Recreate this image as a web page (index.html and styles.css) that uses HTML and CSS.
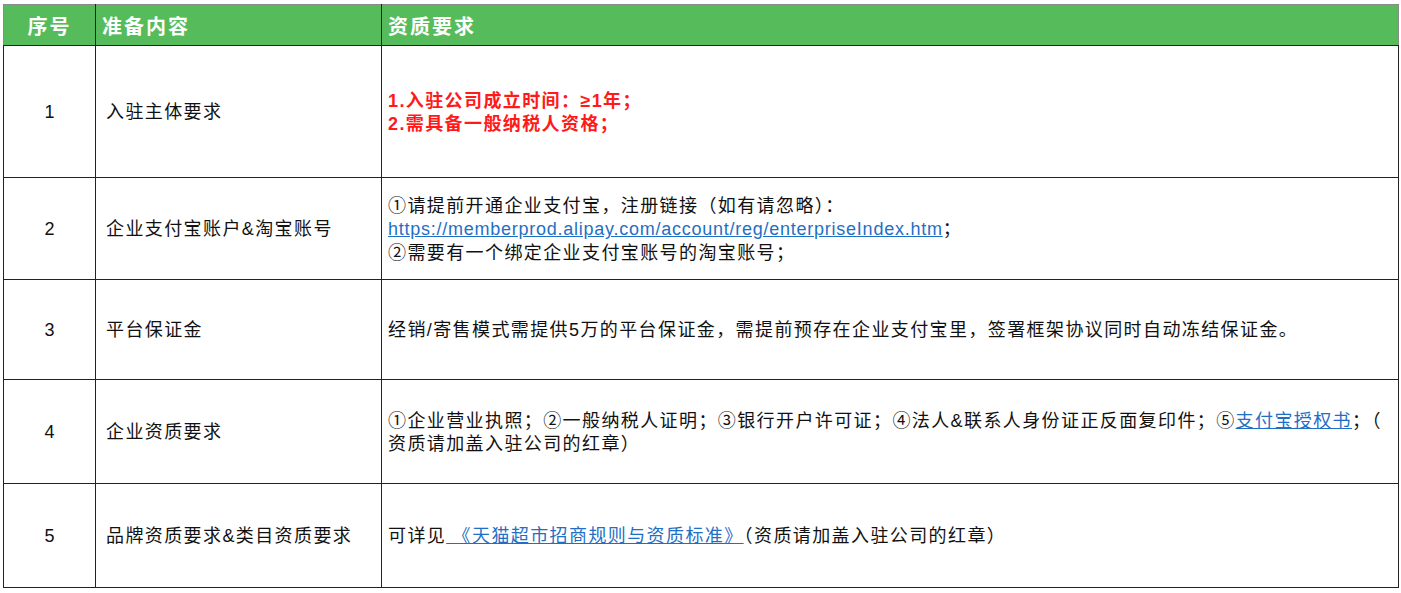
FILE: index.html
```html
<!DOCTYPE html>
<html lang="zh-CN">
<head>
<meta charset="utf-8">
<title>入驻资质要求</title>
<link rel="stylesheet" href="styles.css">
</head>
<body>
<table class="req">
  <colgroup>
    <col class="c-no">
    <col class="c-item">
    <col class="c-desc">
  </colgroup>
  <thead>
    <tr class="head">
      <th class="no">序号</th>
      <th class="item">准备内容</th>
      <th class="desc">资质要求</th>
    </tr>
  </thead>
  <tbody>
    <tr class="r1">
      <td class="no">1</td>
      <td class="item">入驻主体要求</td>
      <td class="desc red">1.入驻公司成立时间：≥1年；<br>2.需具备一般纳税人资格；</td>
    </tr>
    <tr class="r2">
      <td class="no">2</td>
      <td class="item">企业支付宝账户&amp;淘宝账号</td>
      <td class="desc">①请提前开通企业支付宝，注册链接（如有请忽略）：<br><a class="lnk url" href="#">https://memberprod.alipay.com/account/reg/enterpriseIndex.htm</a>；<br>②需要有一个绑定企业支付宝账号的淘宝账号；</td>
    </tr>
    <tr class="r3">
      <td class="no">3</td>
      <td class="item">平台保证金</td>
      <td class="desc">经销/寄售模式需提供5万的平台保证金，需提前预存在企业支付宝里，签署框架协议同时自动冻结保证金。</td>
    </tr>
    <tr class="r4">
      <td class="no">4</td>
      <td class="item">企业资质要求</td>
      <td class="desc">①企业营业执照；②一般纳税人证明；③银行开户许可证；④法人&amp;联系人身份证正反面复印件；⑤<a class="lnk" href="#">支付宝授权书</a>；（<br>资质请加盖入驻公司的红章）</td>
    </tr>
    <tr class="r5">
      <td class="no">5</td>
      <td class="item">品牌资质要求&amp;类目资质要求</td>
      <td class="desc">可详见<a class="lnk" href="#">&nbsp;《天猫超市招商规则与资质标准》</a>（资质请加盖入驻公司的红章）</td>
    </tr>
  </tbody>
</table>
</body>
</html>
```

FILE: styles.css
```css
html, body {
  margin: 0;
  padding: 0;
  background: #ffffff;
}

body {
  padding: 4px 0 0 3px;
  font-family: "Liberation Sans", "Noto Sans CJK SC", sans-serif;
  color: #111;
}

.req {
  border-collapse: collapse;
  table-layout: fixed;
  width: 1395px;
  border: 1px solid #8a8a8a;
}

.c-no { width: 92px; }
.c-item { width: 286px; }
.c-desc { width: 1017px; }

.head th {
  background: #56bb5b;
  color: #ffffff;
  font-size: 20px;
  font-weight: 700;
  letter-spacing: 2px;
  height: 41px;
  padding: 0 6px;
  text-align: left;
  border: 1px solid #222;
  border-top-color: #8a8a8a;
  box-sizing: border-box;
}

.head th.no {
  text-align: center;
  padding: 0;
}

.head th:first-child { border-left-color: #8a8a8a; }
.head th:last-child { border-right-color: #8a8a8a; }

td {
  font-size: 18px;
  letter-spacing: 1.4px;
  line-height: 23.5px;
  vertical-align: middle;
  border: 1px solid #222;
  padding: 3px 4px 0 6px;
}

td.no {
  text-align: center;
  padding: 3px 0 0 0;
  letter-spacing: 0;
}

td.item {
  padding-left: 10px;
}

td.desc {
  border-left-color: #555;
}

.r1 td { height: 128px; }
.r2 td { height: 98px; }
.r3 td { height: 96px; }
.r4 td { height: 100px; }
.r5 td { height: 100px; }

.red {
  color: #ff1a1a;
  font-weight: 700;
}

.lnk {
  color: #1f6fc5;
  text-decoration: underline;
}

.lnk.url {
  letter-spacing: 0.75px;
}
```
